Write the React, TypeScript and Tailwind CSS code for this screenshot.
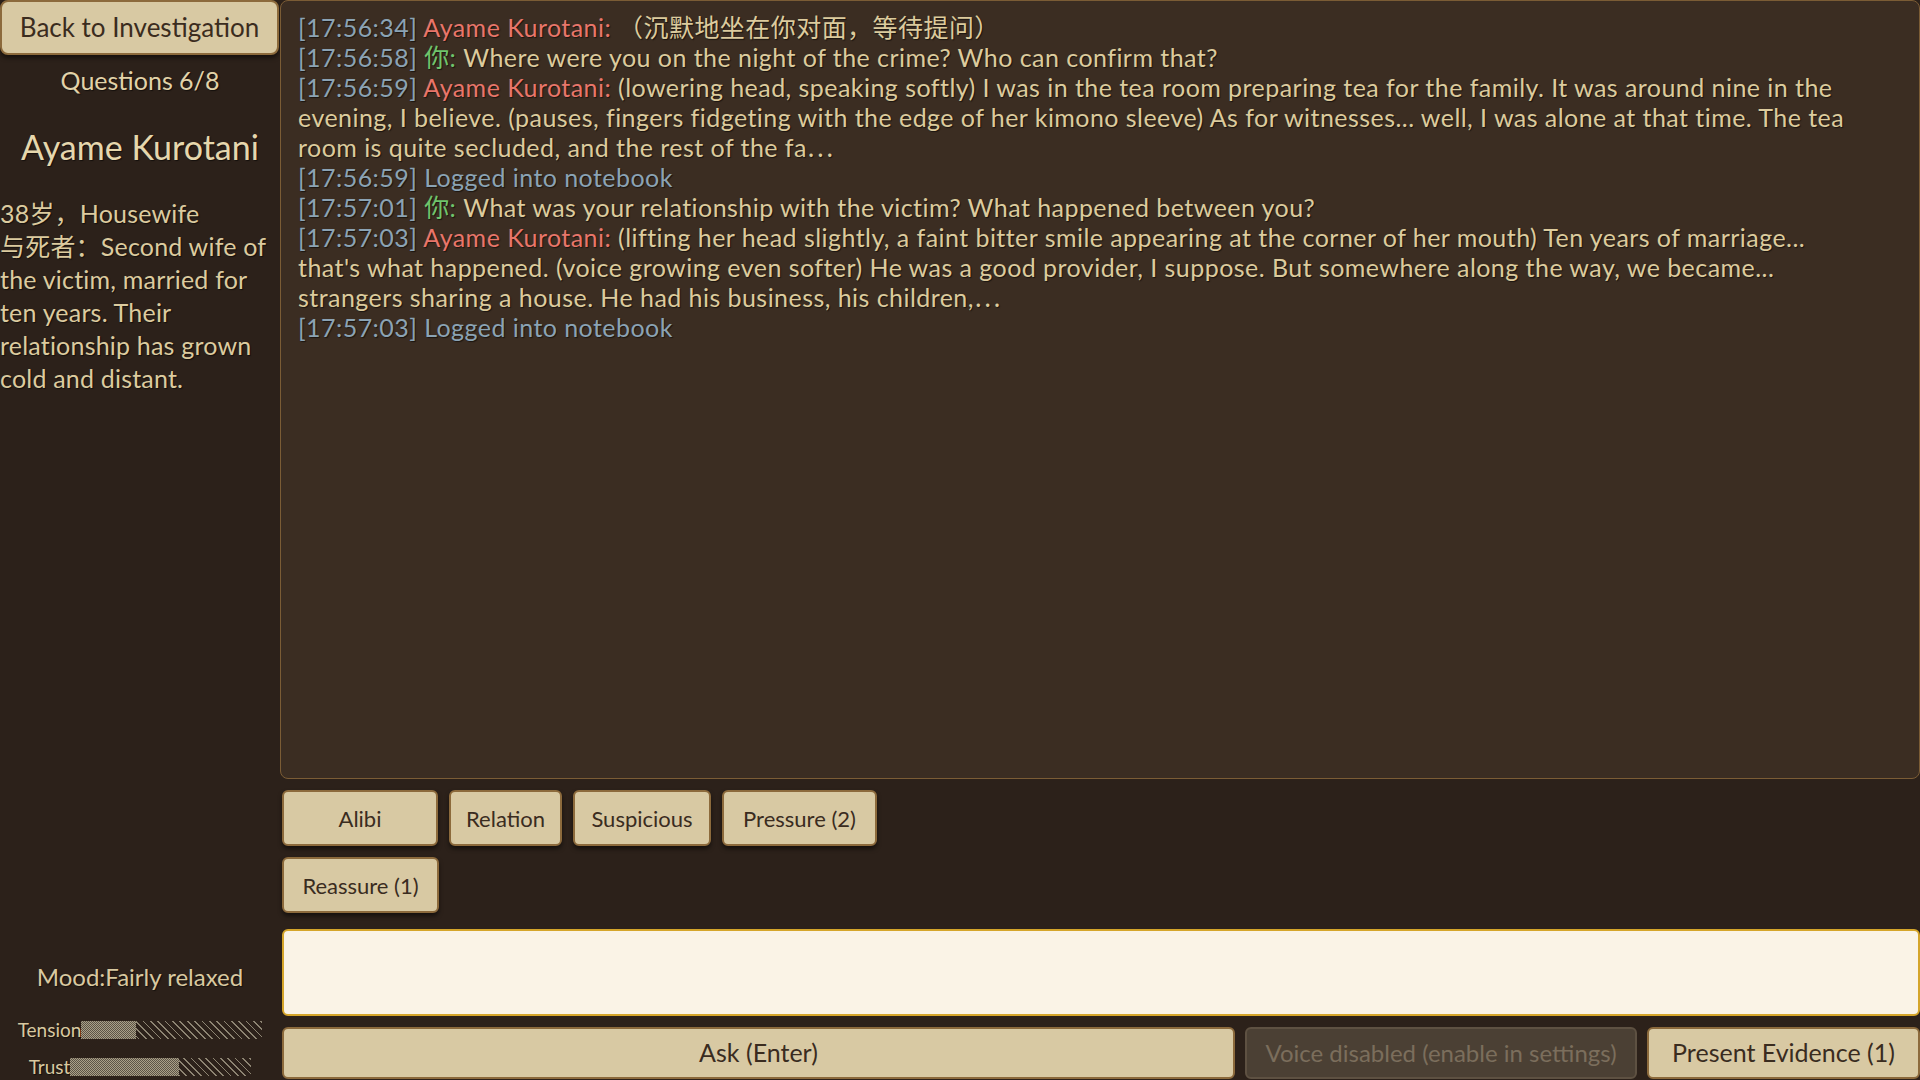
import React from 'react';

type Who = 'npc' | 'you' | 'sys';

interface LogEntry {
  time: string;
  who: Who;
  text: string;
}

const NPC = 'Ayame Kurotani';

// line breaks follow the log widget's wrapping
const LOG: LogEntry[] = [
  { time: '17:56:34', who: 'npc', text: '（沉默地坐在你对面，等待提问）' },
  { time: '17:56:58', who: 'you', text: 'Where were you on the night of the crime? Who can confirm that?' },
  {
    time: '17:56:59',
    who: 'npc',
    text: '(lowering head, speaking softly) I was in the tea room preparing tea for the family. It was around nine in the\nevening, I believe. (pauses, fingers fidgeting with the edge of her kimono sleeve) As for witnesses... well, I was alone at that time. The tea\nroom is quite secluded, and the rest of the fa⋯',
  },
  { time: '17:56:59', who: 'sys', text: 'Logged into notebook' },
  { time: '17:57:01', who: 'you', text: 'What was your relationship with the victim? What happened between you?' },
  {
    time: '17:57:03',
    who: 'npc',
    text: "(lifting her head slightly, a faint bitter smile appearing at the corner of her mouth) Ten years of marriage...\nthat's what happened. (voice growing even softer) He was a good provider, I suppose. But somewhere along the way, we became...\nstrangers sharing a house. He had his business, his children,⋯",
  },
  { time: '17:57:03', who: 'sys', text: 'Logged into notebook' },
];

const QUICK: { label: string; w: string }[][] = [
  [
    { label: 'Alibi', w: 'w-[156px]' },
    { label: 'Relation', w: 'w-[113px]' },
    { label: 'Suspicious', w: 'w-[138px]' },
    { label: 'Pressure (2)', w: 'w-[155px]' },
  ],
  [{ label: 'Reassure (1)', w: 'w-[157px]' }],
];

const FONT = "font-['Lato','Noto_Sans_CJK_SC',sans-serif]";
const SHADOW = '[text-shadow:1px_1px_1px_rgba(0,0,0,0.55)]';

function LogLine({ entry }: { entry: LogEntry }) {
  const [first, ...rest] = entry.text.split('\n');
  const body = entry.who === 'sys' ? 'text-[#8ba3b4]' : 'text-[#dccb9d]';
  return (
    <>
      <div className="whitespace-nowrap">
        <span className="text-[#8ba3b4]">[{entry.time}] </span>
        {entry.who === 'npc' && <span className="text-[#e8766a]">{NPC}: </span>}
        {entry.who === 'you' && <span className="text-[#6fc46c]">你: </span>}
        <span className={body}>{first}</span>
      </div>
      {rest.map((line, i) => (
        <div key={i} className={`whitespace-nowrap ${body}`}>
          {line}
        </div>
      ))}
    </>
  );
}

function Meter({ label, value }: { label: string; value: number }) {
  return (
    <div className="flex items-center justify-center">
      <span className="text-[19px] leading-[24px] text-[#d9c9a0]">{label}</span>
      <div className="h-[18px] w-[181px] bg-[repeating-linear-gradient(45deg,transparent_0_4px,#8d8472_4px_5.2px)]">
        <div
          className="h-full bg-[repeating-conic-gradient(#aaa088_0_25%,#5c5447_0_50%)] bg-[length:2px_2px]"
          style={{ width: `${value}%` }}
        />
      </div>
    </div>
  );
}

function ActionButton({ label, w }: { label: string; w: string }) {
  return (
    <button
      className={`h-[56px] ${w} rounded-md border-2 border-[#8c6a3c] bg-[#d8c9a3] text-[22px] text-[#3a2c1f] shadow-[0_3px_4px_rgba(0,0,0,0.5)]`}
    >
      {label}
    </button>
  );
}

export default function App() {
  return (
    <div className={`flex h-[1080px] w-[1920px] overflow-hidden bg-[#2c211a] ${FONT} ${SHADOW}`}>
      {/* suspect sidebar */}
      <aside className="flex w-[280px] shrink-0 flex-col pb-[1px]">
        <button className="h-[55px] w-[279px] rounded-lg border-2 border-[#8c6a3c] bg-[#d8c9a3] text-[26px] text-[#3b2c1e] shadow-[0_3px_4px_rgba(0,0,0,0.5)] [text-shadow:none]">
          Back to Investigation
        </button>
        <div className="mt-[10px] text-center text-[25px] leading-[30px] text-[#e2d3a9]">Questions 6/8</div>
        <div className="mt-[31px] text-center text-[34px] leading-[42px] text-[#e6d7ad]">{NPC}</div>
        <div className="mt-[29px] text-[25px] leading-[33px] tracking-[0.2px] text-[#dccb9f]">
          <div className="whitespace-nowrap">38岁，Housewife</div>
          <div className="whitespace-nowrap">与死者：Second wife of</div>
          <div className="whitespace-nowrap">the victim, married for</div>
          <div className="whitespace-nowrap">ten years. Their</div>
          <div className="whitespace-nowrap">relationship has grown</div>
          <div className="whitespace-nowrap">cold and distant.</div>
        </div>
        <div className="mt-auto text-center text-[24px] leading-[30px] text-[#d9c9a0]">Mood:Fairly relaxed</div>
        <div className="mt-[26px]">
          <Meter label="Tension" value={30} />
        </div>
        <div className="mt-[13px]">
          <Meter label="Trust" value={60} />
        </div>
      </aside>

      {/* interrogation */}
      <main className="flex min-w-0 flex-1 flex-col">
        <section className="h-[779px] shrink-0 overflow-hidden rounded-lg border border-[#7b5c35] bg-[#3b2d22] pl-[17px] pr-[20px] pt-[11px] text-[25px] leading-[30px] tracking-[0.45px]">
          {LOG.map((entry, i) => (
            <LogLine key={i} entry={entry} />
          ))}
        </section>

        <div className="ml-[2px] mt-[11px] flex flex-col gap-[11px] [text-shadow:none]">
          {QUICK.map((row, i) => (
            <div key={i} className="flex gap-[11px]">
              {row.map((q) => (
                <ActionButton key={q.label} label={q.label} w={q.w} />
              ))}
            </div>
          ))}
        </div>

        <textarea className="ml-[2px] mt-[16px] h-[87px] shrink-0 resize-none rounded-md border-2 border-[#d5a52a] bg-[#faf3e6] outline-none" />

        <div className="ml-[2px] mt-[11px] flex h-[52px] gap-[10px] text-[25px] [text-shadow:none]">
          <button className="flex-1 rounded-md border-2 border-[#8c6a3c] bg-[#d8c9a3] text-[#3a2c1f]">Ask (Enter)</button>
          <button className="w-[392px] rounded-md border-2 border-[#5e5142] bg-[#4b4034] text-[24px] text-[#7b6e5c]">
            Voice disabled (enable in settings)
          </button>
          <button className="w-[273px] rounded-md border-2 border-[#8c6a3c] bg-[#d8c9a3] text-[#3a2c1f]">
            Present Evidence (1)
          </button>
        </div>
      </main>
    </div>
  );
}
